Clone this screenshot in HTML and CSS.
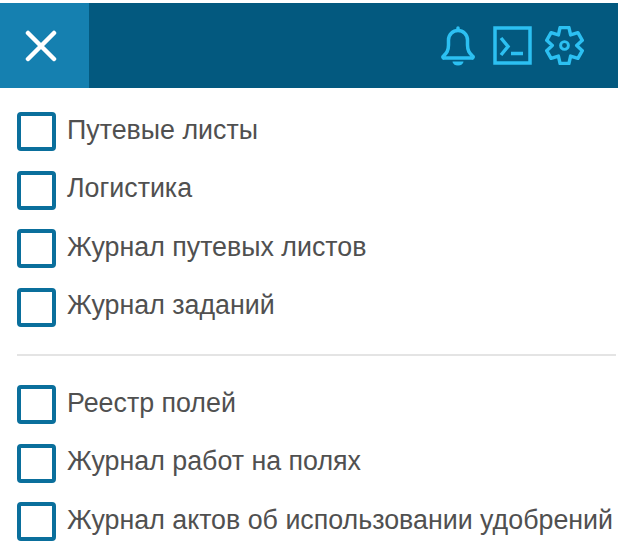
FILE: index.html
```html
<!DOCTYPE html>
<html lang="ru">
<head>
<meta charset="utf-8">
<title>Меню</title>
<link rel="stylesheet" href="styles.css">
</head>
<body>
<header class="topbar">
  <div class="close">
    <svg class="close-icon" viewBox="0 0 32 32" width="32" height="32"><path d="M3 3L29 29M29 3L3 29" fill="none" stroke="#fff" stroke-width="4.500" stroke-linecap="round"/></svg>
  </div>
  <div class="actions">
    <svg class="icon bell" viewBox="0 0 34 40" width="34" height="40"><path d="M2.500 30c3-3 5-5 5-11v-5a9.500 9.500 0 0 1 19 0v5c0 6 2 8 5 11a1 1 0 0 1-1 2H3.500a1 1 0 0 1-1-2zM17 4V2" fill="none" stroke="#2cc0f2" stroke-width="3.500" stroke-linecap="round" stroke-linejoin="round"/><path d="M11.500 35.500h11a5.500 4 0 0 1-11 0z" fill="#2cc0f2"/></svg>
    <svg class="icon" viewBox="0 0 39 39" width="39" height="39"><rect x="2" y="2" width="35" height="35" fill="none" stroke="#2cc0f2" stroke-width="3.500"/><path d="M8 12l7 8.500-7 8.500M18 27.500h12" fill="none" stroke="#2cc0f2" stroke-width="3.500"/></svg>
    <svg class="icon" viewBox="0 0 40 40" width="39" height="39"><path d="M15.500 1.500h9l1.750 7.670 7.520-2.320 4.500 7.800-5.770 5.350 5.770 5.350-4.500 7.800-7.520-2.320-1.750 7.670h-9l-1.750-7.670-7.520 2.320-4.500-7.800 5.770-5.350-5.770-5.350 4.500-7.800 7.520 2.320z" fill="none" stroke="#2cc0f2" stroke-width="3.500" stroke-linejoin="round"/><circle cx="20" cy="20" r="4" fill="none" stroke="#2cc0f2" stroke-width="3"/></svg>
  </div>
</header>
<main class="menu">
  <ul class="group">
    <li class="row"><span class="box"></span><span class="label">Путевые листы</span></li>
    <li class="row"><span class="box"></span><span class="label">Логистика</span></li>
    <li class="row"><span class="box"></span><span class="label">Журнал путевых листов</span></li>
    <li class="row"><span class="box"></span><span class="label">Журнал заданий</span></li>
  </ul>
  <hr class="divider">
  <ul class="group">
    <li class="row"><span class="box"></span><span class="label">Реестр полей</span></li>
    <li class="row"><span class="box"></span><span class="label">Журнал работ на полях</span></li>
    <li class="row"><span class="box"></span><span class="label">Журнал актов об использовании удобрений</span></li>
  </ul>
</main>
</body>
</html>
```

FILE: styles.css
```css
* { box-sizing: border-box; }
html, body { margin: 0; padding: 0; }
body {
  width: 618px;
  height: 558px;
  overflow: hidden;
  background: #fff;
  font-family: "Liberation Sans", Arial, sans-serif;
  color: #505050;
  padding-top: 3px;
}
.topbar {
  display: flex;
  height: 85px;
  background: #03597f;
}
.close {
  width: 89px;
  background: #1580b0;
  display: flex;
  align-items: center;
  justify-content: center;
  padding-right: 8px;
}
.actions {
  flex: 1;
  display: flex;
  justify-content: flex-end;
  align-items: center;
  gap: 13px;
  padding-right: 34px;
}
.icon { display: block; }
.bell { margin-right: 5px; }
.menu { padding: 24px 0 0 17px; }
.group {
  list-style: none;
  margin: 0;
  padding: 0;
  display: flex;
  flex-direction: column;
  gap: 19.500px;
}
.row {
  display: flex;
  align-items: center;
  gap: 11px;
  height: 39px;
}
.box {
  width: 39px;
  height: 39px;
  border: 4px solid #0a6f9c;
  border-radius: 4px;
  flex: none;
}
.label {
  font-size: 26.800px;
  white-space: nowrap;
  padding-bottom: 3px;
}
.divider {
  border: 0;
  height: 2px;
  background: #e4e4e4;
  margin: 27px 2px 29.500px 0;
}
```
